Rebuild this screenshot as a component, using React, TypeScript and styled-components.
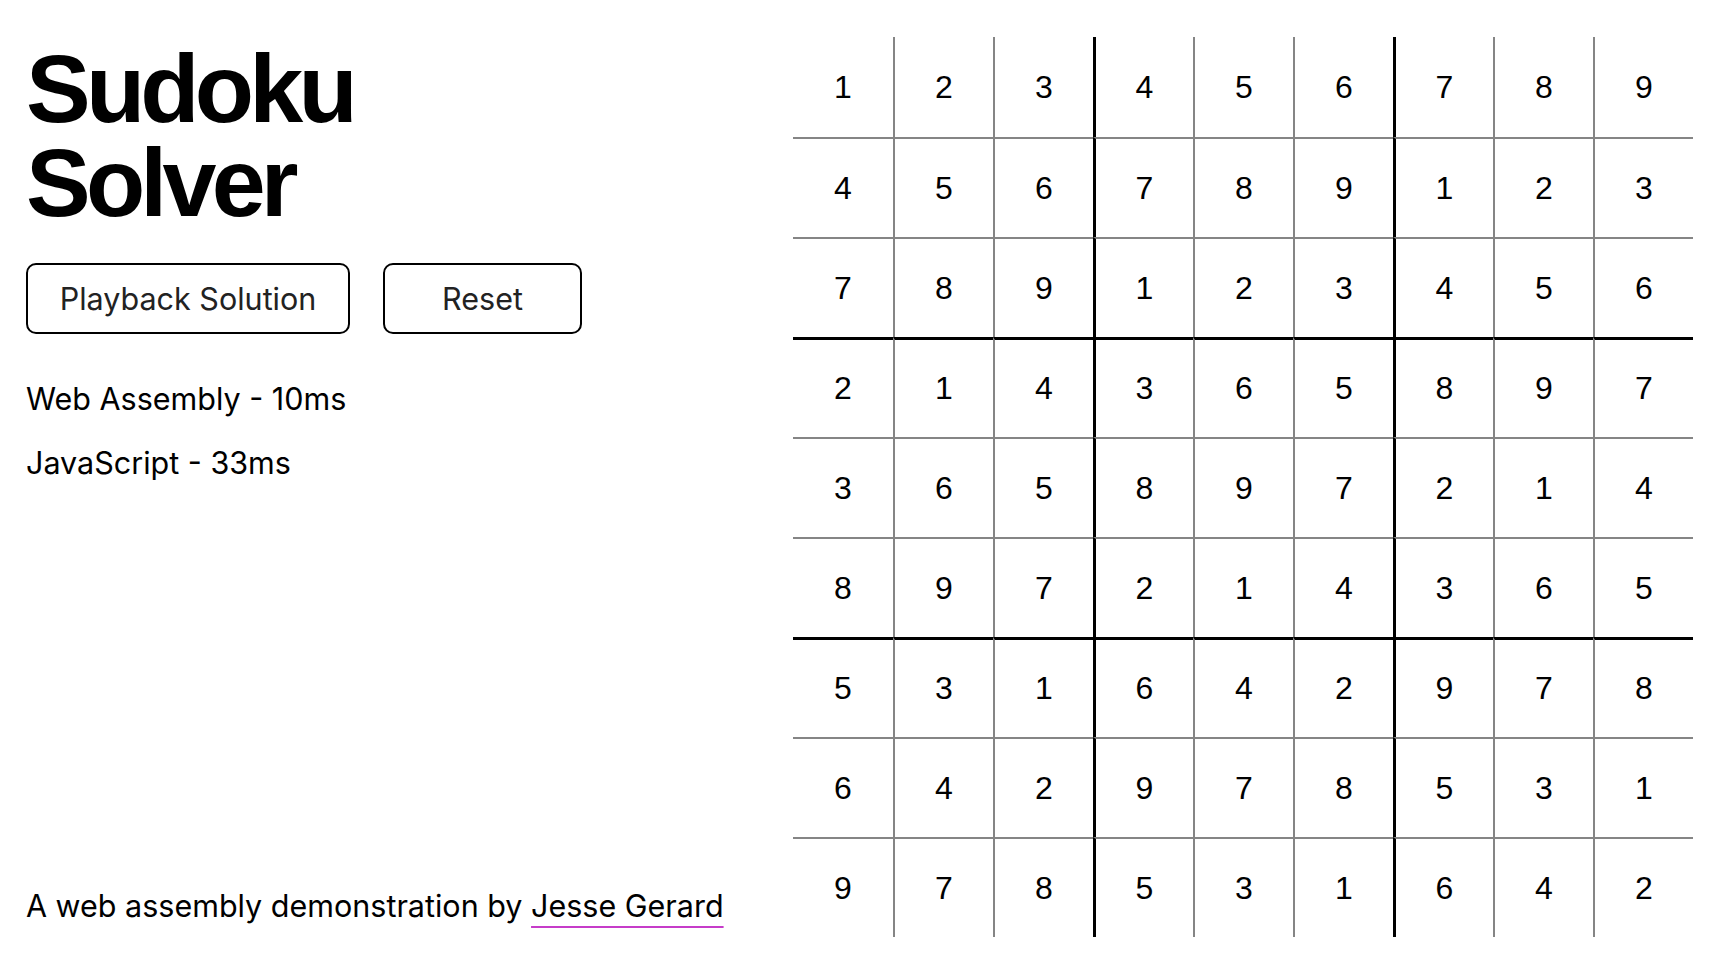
import React from "react";
import styled, { createGlobalStyle } from "styled-components";

const GlobalStyle = createGlobalStyle`
  html, body {
    margin: 0;
    padding: 0;
    background: #ffffff;
  }
  body {
    font-family: "Inter", "Noto Sans", sans-serif;
    color: #000;
  }
  * { box-sizing: border-box; }
`;

const Page = styled.div`
  display: flex;
  justify-content: space-between;
  align-items: stretch;
  padding: 37px 28px 0 26px;
  width: 1721px;
  height: 968px;
`;

const Side = styled.aside`
  display: flex;
  flex-direction: column;
  align-items: flex-start;
  height: 900px;
`;

const Title = styled.h1`
  margin: 5px 0 33px;
  font-family: "Liberation Sans", Arial, sans-serif;
  font-weight: 700;
  font-size: 97px;
  line-height: 94px;
  letter-spacing: -4.8px;
  color: #000;
`;

const Controls = styled.div`
  display: flex;
  gap: 33px;
  margin-bottom: 45px;
`;

const Button = styled.button<{ $width: number }>`
  width: ${(p) => p.$width}px;
  height: 71px;
  display: flex;
  align-items: center;
  justify-content: center;
  padding: 0;
  background: #fff;
  border: 2px solid #000;
  border-radius: 10px;
  font-family: "Inter", "Noto Sans", sans-serif;
  font-size: 30.5px;
  color: #222;
  cursor: pointer;
`;

const Timing = styled.p`
  margin: 0 0 24px;
  font-size: 30.5px;
  line-height: 40px;
  color: #000;
`;

const Footer = styled.p`
  margin: auto 0 11px;
  font-size: 30.5px;
  line-height: 40px;
  color: #000;
`;

const Author = styled.a`
  color: #000;
  text-decoration: underline;
  text-decoration-color: #c63cc9;
  text-decoration-thickness: 2px;
  text-underline-offset: 9px;
`;

const Board = styled.div`
  display: grid;
  grid-template-columns: repeat(9, 100px);
  grid-template-rows: repeat(9, 100px);
  width: 900px;
  height: 900px;
`;

const line = (i: number) =>
  i === 0 ? "none" : i === 3 || i === 6 ? "3px solid #000" : "2px solid #858585";

const Cell = styled.div<{ $col: number; $row: number }>`
  display: flex;
  align-items: center;
  justify-content: center;
  font-family: "Liberation Sans", Arial, sans-serif;
  font-size: 32px;
  color: #000;
  border-left: ${(p) => line(p.$col)};
  border-top: ${(p) => line(p.$row)};
`;

const solution = [
  [1, 2, 3, 4, 5, 6, 7, 8, 9],
  [4, 5, 6, 7, 8, 9, 1, 2, 3],
  [7, 8, 9, 1, 2, 3, 4, 5, 6],
  [2, 1, 4, 3, 6, 5, 8, 9, 7],
  [3, 6, 5, 8, 9, 7, 2, 1, 4],
  [8, 9, 7, 2, 1, 4, 3, 6, 5],
  [5, 3, 1, 6, 4, 2, 9, 7, 8],
  [6, 4, 2, 9, 7, 8, 5, 3, 1],
  [9, 7, 8, 5, 3, 1, 6, 4, 2],
];

export default function App() {
  return (
    <>
      <GlobalStyle />
      <Page>
        <Side>
          <Title>
            Sudoku
            <br />
            Solver
          </Title>
          <Controls>
            <Button $width={324}>Playback Solution</Button>
            <Button $width={199}>Reset</Button>
          </Controls>
          <Timing>Web Assembly - 10ms</Timing>
          <Timing>JavaScript - 33ms</Timing>
          <Footer>
            A web assembly demonstration by{" "}
            <Author href="#">Jesse Gerard</Author>
          </Footer>
        </Side>
        <Board>
          {solution.map((row, r) =>
            row.map((v, c) => (
              <Cell key={`${r}-${c}`} $row={r} $col={c}>
                {v}
              </Cell>
            ))
          )}
        </Board>
      </Page>
    </>
  );
}
